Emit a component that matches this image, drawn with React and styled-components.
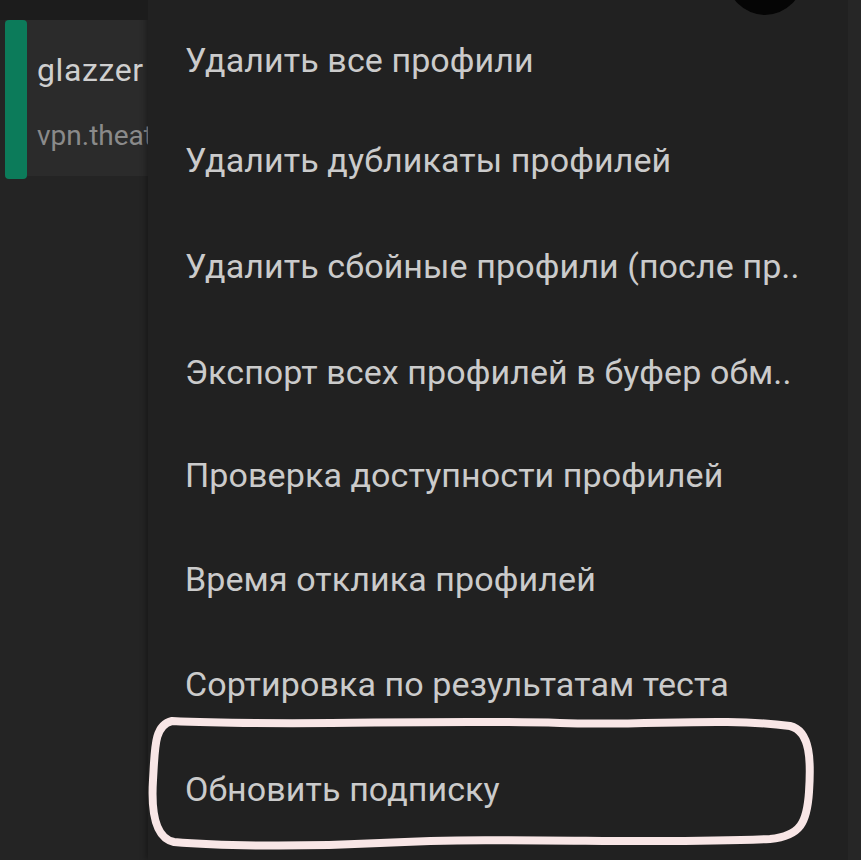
import styled, { createGlobalStyle } from "styled-components";

const Global = createGlobalStyle`
  html, body {
    margin: 0;
    padding: 0;
    background: #232323;
  }
  body {
    font-family: Roboto, "Noto Sans", sans-serif;
  }
`;

const Screen = styled.div`
  position: relative;
  display: flex;
  width: 861px;
  height: 860px;
  overflow: hidden;
  background: #242424;
`;

const Side = styled.div`
  width: 148px;
  flex-shrink: 0;
  padding-top: 20px;
  background: #242424;
`;

const TopShade = styled.div`
  position: absolute;
  left: 0;
  top: 0;
  width: 148px;
  height: 20px;
  background: #1c1c1c;
`;

const Card = styled.div`
  display: flex;
  height: 156px;
  margin-left: 5px;
  background: #2b2b2b;
`;

const Accent = styled.div`
  width: 22px;
  flex-shrink: 0;
  border-radius: 4px;
  background: #0c7b5a;
  margin-bottom: -3px;
`;

const CardBody = styled.div`
  display: flex;
  flex-direction: column;
  padding: 31px 0 0 10px;
  overflow: hidden;
  white-space: nowrap;
`;

const CardTitle = styled.span`
  font-size: 32px;
  letter-spacing: 0.6px;
  color: #cfcfcf;
  line-height: 38px;
`;

const CardSub = styled.span`
  margin-top: 31px;
  font-size: 28px;
  color: #8a8a8a;
  line-height: 32px;
`;

const Menu = styled.div`
  flex: 1;
  display: flex;
  flex-direction: column;
  padding-top: 11px;
  background: #212121;
  box-shadow: -2px 0 6px rgba(0, 0, 0, 0.35);
`;

const Item = styled.div`
  height: ${(p) => p.h}px;
  flex-shrink: 0;
  display: flex;
  align-items: center;
  padding-left: 37px;
  font-size: 34px;
  letter-spacing: 0.1px;
  color: #cbcbcb;
  white-space: nowrap;
`;

const Edge = styled.div`
  width: 13px;
  flex-shrink: 0;
  background: #262626;
`;

const Notch = styled.div`
  position: absolute;
  left: 727px;
  top: -61px;
  width: 76px;
  height: 76px;
  border-radius: 50%;
  background: #050505;
`;

const Scribble = styled.svg`
  position: absolute;
  left: 0;
  top: 0;
  pointer-events: none;
`;

const items = [
  ["Удалить все профили", 97],
  ["Удалить дубликаты профилей", 104],
  ["Удалить сбойные профили (после пр..", 108],
  ["Экспорт всех профилей в буфер обм..", 104],
  ["Проверка доступности профилей", 102],
  ["Время отклика профилей", 105],
  ["Сортировка по результатам теста", 105],
  ["Обновить подписку", 105],
];

export default function App() {
  return (
    <>
      <Global />
      <Screen>
        <TopShade />
        <Side>
          <Card>
            <Accent />
            <CardBody>
              <CardTitle>glazzer</CardTitle>
              <CardSub>vpn.theater</CardSub>
            </CardBody>
          </Card>
        </Side>
        <Menu>
          {items.map(([label, h]) => (
            <Item key={label} h={h}>
              {label}
            </Item>
          ))}
        </Menu>
        <Edge />
        <Notch />
        <Scribble width="861" height="860" viewBox="0 0 861 860">
          <path
            d="M172 721 C 300 727, 420 719, 560 723 C 650 726, 720 717, 790 726 C 811 731, 811 762, 809 792 C 807 822, 801 836, 770 839 C 640 845, 520 836, 380 843 C 300 847, 220 846, 174 842 C 155 838, 151 812, 153 780 C 155 748, 154 725, 172 721 Z"
            fill="none"
            stroke="#f8e6e6"
            strokeWidth="8"
            strokeLinejoin="round"
          />
        </Scribble>
      </Screen>
    </>
  );
}
